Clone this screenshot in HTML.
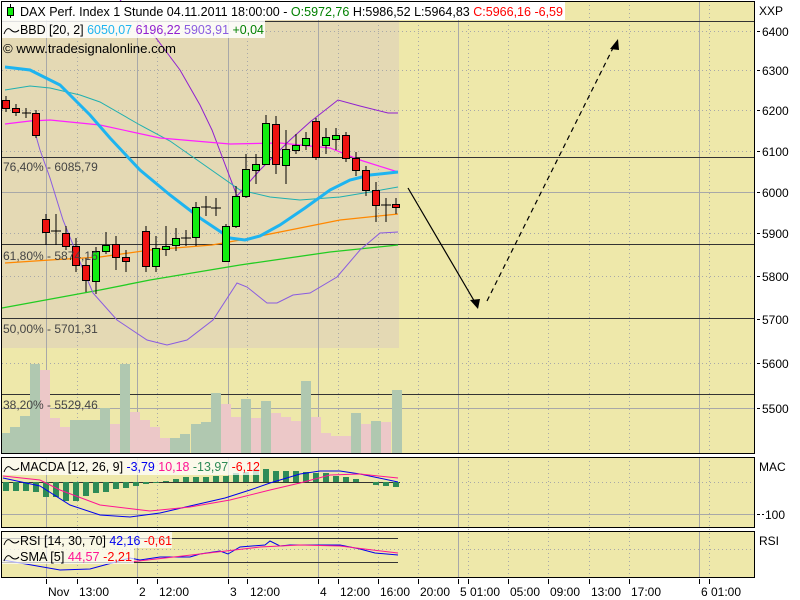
<!DOCTYPE html>
<html><head><meta charset="utf-8"><style>
html,body{margin:0;padding:0;background:#fff;width:800px;height:600px;overflow:hidden}
svg{display:block;font-family:"Liberation Sans",sans-serif}
</style></head><body>
<svg width="800" height="600" viewBox="0 0 800 600" xmlns="http://www.w3.org/2000/svg">
<!-- panels background -->
<rect x="2" y="1" width="752" height="452" fill="#eee8aa"/>
<rect x="2" y="457" width="752" height="70" fill="#eee8aa"/>
<rect x="2" y="531" width="752" height="46" fill="#eee8aa"/>
<!-- bollinger shading -->
<rect x="2" y="20" width="397" height="328" fill="#e4d9b4"/>
<!-- vertical grid -->
<g stroke="#a8a8a8" stroke-width="1">
<path d="M46.5 1V453M137.5 1V453M228.5 1V453M318.5 1V453M458.5 1V453M699.5 1V453"/>
<path d="M46.5 457V527M137.5 457V527M228.5 457V527M318.5 457V527M458.5 457V527M699.5 457V527"/>
<path d="M46.5 531V577M137.5 531V577M228.5 531V577M318.5 531V577M458.5 531V577M699.5 531V577"/>
</g>
<g stroke="#a8a8a8" stroke-width="1" stroke-dasharray="1,3">
<path d="M77.5 1V577M157.5 1V577M247.5 1V577M338.5 1V577M378.5 1V577M418.5 1V577M468.5 1V577M508.5 1V577M548.5 1V577M589.5 1V577M629.5 1V577M709.5 1V577"/>
<path d="M2 31.5H754M2 70.5H754M2 110.5H754M2 151.5H754M2 233.5H754M2 276.5H754M2 363.5H754M2 482.5H754M2 549.5H754"/>
</g>
<path d="M2 192.5H754M2 408.5H754M2 514.5H754" stroke="#a8a8a8"/>
<!-- fib lines -->
<path d="M2 21.5H754M2 157.5H754M2 244.5H754M2 318.5H754M2 394.5H754" stroke="#333"/>
<!-- volume -->
<g fill="#b0c8b0">
<rect x="2" y="433" width="8" height="20"/><rect x="10" y="427" width="10" height="26"/><rect x="20" y="416" width="10" height="37"/><rect x="30" y="364" width="10" height="89"/>
<rect x="70" y="420" width="30" height="33"/><rect x="100" y="408" width="10" height="45"/><rect x="120" y="364" width="10" height="89"/>
<rect x="170" y="438" width="10" height="15"/><rect x="180" y="434" width="10" height="19"/><rect x="191" y="424" width="10" height="29"/><rect x="201" y="422" width="10" height="31"/><rect x="211" y="393" width="10" height="60"/>
<rect x="241" y="399" width="10" height="54"/><rect x="261" y="401" width="10" height="52"/><rect x="301" y="381" width="10" height="72"/><rect x="351" y="413" width="10" height="40"/><rect x="371" y="421" width="10" height="32"/><rect x="392" y="390" width="10" height="63"/>
</g>
<g fill="#ecc8c8">
<rect x="40" y="370" width="10" height="83"/><rect x="50" y="418" width="10" height="35"/><rect x="60" y="427" width="10" height="26"/><rect x="110" y="424" width="10" height="29"/>
<rect x="130" y="412" width="10" height="41"/><rect x="140" y="420" width="10" height="33"/><rect x="150" y="427" width="10" height="26"/><rect x="160" y="438" width="10" height="15"/>
<rect x="221" y="404" width="10" height="49"/><rect x="231" y="417" width="10" height="36"/><rect x="251" y="418" width="10" height="35"/><rect x="271" y="413" width="10" height="40"/><rect x="281" y="417" width="10" height="36"/><rect x="291" y="421" width="10" height="32"/>
<rect x="311" y="417" width="10" height="36"/><rect x="321" y="433" width="10" height="20"/><rect x="331" y="436" width="20" height="17"/><rect x="361" y="424" width="10" height="29"/><rect x="381" y="422" width="10" height="31"/>
</g>
<!-- indicator lines -->
<g fill="none">
<polyline stroke="#22cc22" stroke-width="1.3" points="2,308 100,290 150,280 240,265 330,252 398,245"/>
<polyline stroke="#ff8800" stroke-width="1.3" points="5,263 50,260 100,257 150,250 212,245 240,240 290,230 340,220 398,214"/>
<polyline stroke="#8a5ce0" stroke-width="1" points="36,136 40,150 50,178 63,220 80,262 93,293 117,320 147,340 167,345 187,340 213,320 237,283 247,287 267,303 277,303 293,295 310,293 337,277 360,250 380,233 398,232"/>
<polyline stroke="#9020d0" stroke-width="1" points="120,0 150,30 180,70 200,105 212,130 237,196 260,170 290,140 310,122 338,100 360,106 388,113 398,113"/>
<polyline stroke="#20b0b0" stroke-width="1" points="5,90 30,86 50,88 80,95 100,102 140,125 170,141 200,162 240,190 270,197 300,200 340,197 370,192 398,187"/>
<polyline stroke="#ff20ff" stroke-width="1.2" points="5,124 30,121 50,120 100,125 160,138 230,144 280,143 330,148 360,160 398,172"/>
<polyline stroke="#1eb4f0" stroke-width="3" points="5,67 30,70 60,85 90,115 110,138 140,170 170,195 200,218 230,238 245,240 260,236 280,225 305,208 330,190 350,180 370,175 398,172"/>
</g>
<!-- candles -->
<g stroke="#000" stroke-width="1">
<path d="M6 96V112M16 104V116M26 108V118M36 110V138M46 214V245M56 214V245M66 226V250M76 238V272M86 258V292M96 247V294M106 232V254M116 236V270M126 250V272M146 226V272M156 236V272M166 226V256M176 228V251M186 230V246M196 202V246M206 196V216M216 198V216M226 224V262M236 186V228M246 154V198M256 154V184M266 115V165M276 116V174M286 130V184M296 134V154M306 132V150M316 118V160M326 128V154M336 128V150M346 132V162M356 152V176M366 166V196M376 182V222M386 198V222M396 198V214"/>
<path d="M22 113H31M51 231H61M181 238H191M201 207H211M211 208H221M381 205H391"/>
</g>
<g stroke="#000" stroke-width="1">
<g fill="#ee1111">
<rect x="2.5" y="100.5" width="7" height="8"/><rect x="12.5" y="108.5" width="7" height="4"/><rect x="32.5" y="113.5" width="7" height="22"/>
<rect x="42.5" y="219.5" width="7" height="13"/><rect x="62.5" y="233.5" width="7" height="13"/><rect x="72.5" y="246.5" width="7" height="19"/><rect x="82.5" y="265.5" width="7" height="15"/>
<rect x="112.5" y="244.5" width="7" height="13"/><rect x="122.5" y="257.5" width="7" height="4"/><rect x="142.5" y="231.5" width="7" height="35"/>
<rect x="272.5" y="124.5" width="7" height="40"/><rect x="312.5" y="121.5" width="7" height="36"/><rect x="342.5" y="135.5" width="7" height="23"/><rect x="352.5" y="158.5" width="7" height="12"/><rect x="362.5" y="170.5" width="7" height="20"/><rect x="372.5" y="190.5" width="7" height="15"/><rect x="392.5" y="204.5" width="7" height="3"/>
</g>
<g fill="#11ee11">
<rect x="92.5" y="251.5" width="7" height="30"/><rect x="102.5" y="245.5" width="7" height="6"/><rect x="152.5" y="248.5" width="7" height="18"/><rect x="162.5" y="246.5" width="7" height="3"/><rect x="172.5" y="238.5" width="7" height="7"/>
<rect x="192.5" y="207.5" width="7" height="30"/><rect x="222.5" y="226.5" width="7" height="35"/><rect x="232.5" y="196.5" width="7" height="30"/><rect x="242.5" y="169.5" width="7" height="27"/><rect x="252.5" y="164.5" width="7" height="6"/>
<rect x="262.5" y="123.5" width="7" height="41"/><rect x="282.5" y="149.5" width="7" height="16"/><rect x="292.5" y="145.5" width="7" height="5"/><rect x="302.5" y="138.5" width="7" height="7"/><rect x="322.5" y="137.5" width="7" height="8"/><rect x="332.5" y="135.5" width="7" height="4"/>
</g>
</g>
<!-- arrows -->
<path d="M408 188L476 304" stroke="#000" stroke-width="1.2"/>
<path d="M478 309L470 300L480 299Z" fill="#000"/>
<path d="M487 301L614 46" stroke="#000" stroke-width="1.2" stroke-dasharray="5,4" fill="none"/>
<path d="M618 39L610 49L619 50Z" fill="#000"/>
<!-- fib labels -->
<g font-size="12" fill="#444">
<text x="3" y="171">76,40% - 6085,79</text>
<text x="3" y="260">61,80% - 5874,16</text>
<text x="3" y="333">50,00% - 5701,31</text>
<text x="3" y="409">38,20% - 5529,46</text>
</g>
<!-- header -->
<rect x="2" y="2" width="563" height="18" fill="#fff"/>
<rect x="2" y="20" width="263" height="18" fill="#fff" fill-opacity="0.85"/>
<path d="M10.5 4V18" stroke="#000"/><rect x="7.5" y="7.5" width="6" height="8" fill="#11ee11" stroke="#000"/>
<text x="20" y="16" font-size="12.5" textLength="543" lengthAdjust="spacingAndGlyphs"><tspan fill="#000">DAX Perf. Index 1 Stunde  04.11.2011 18:00:00 - </tspan><tspan fill="#008000">O:5972,76</tspan><tspan fill="#000"> H:5986,52 L:5964,83 </tspan><tspan fill="#ff0000">C:5966,16 -6,59</tspan></text>
<path d="M4 34Q7 26 11 30T19 30" fill="none" stroke="#000"/>
<text x="20" y="34" font-size="12.5" textLength="244" lengthAdjust="spacingAndGlyphs"><tspan fill="#000">BBD [20, 2] </tspan><tspan fill="#1eb4f0">6050,07 </tspan><tspan fill="#9020d0">6196,22 </tspan><tspan fill="#8a5ce0">5903,91 </tspan><tspan fill="#008000">+0,04</tspan></text>
<text x="3" y="53" font-size="13" fill="#000" textLength="173" lengthAdjust="spacingAndGlyphs">© www.tradesignalonline.com</text>
<!-- MACD -->
<path d="M2 482.5H400" stroke="#333"/>
<g fill="#2e8b57">
<rect x="3" y="482" width="6" height="9"/><rect x="13" y="482" width="6" height="9"/><rect x="23" y="482" width="6" height="9"/><rect x="33" y="482" width="6" height="10"/><rect x="43" y="482" width="6" height="15"/><rect x="53" y="482" width="6" height="15"/><rect x="63" y="482" width="6" height="19"/><rect x="73" y="482" width="6" height="19"/><rect x="83" y="482" width="6" height="14"/><rect x="93" y="482" width="6" height="11"/><rect x="103" y="482" width="6" height="10"/><rect x="113" y="482" width="6" height="7"/><rect x="123" y="482" width="6" height="6"/><rect x="133" y="482" width="6" height="4"/><rect x="143" y="482" width="6" height="2"/><rect x="153" y="482" width="6" height="1"/>
<rect x="163" y="481" width="6" height="1"/><rect x="173" y="479" width="6" height="3"/><rect x="183" y="477" width="6" height="5"/><rect x="193" y="477" width="6" height="5"/><rect x="203" y="477" width="6" height="5"/><rect x="213" y="476" width="6" height="6"/><rect x="223" y="476" width="6" height="6"/><rect x="233" y="473" width="6" height="9"/><rect x="243" y="472" width="6" height="10"/><rect x="253" y="469" width="6" height="13"/><rect x="263" y="469" width="6" height="13"/><rect x="273" y="471" width="6" height="11"/><rect x="283" y="471" width="6" height="11"/><rect x="293" y="471" width="6" height="11"/><rect x="303" y="472" width="6" height="10"/><rect x="313" y="473" width="6" height="9"/><rect x="323" y="473" width="6" height="9"/><rect x="333" y="476" width="6" height="6"/><rect x="343" y="477" width="6" height="5"/><rect x="353" y="479" width="6" height="3"/>
<rect x="373" y="482" width="6" height="3"/><rect x="383" y="482" width="6" height="4"/><rect x="393" y="482" width="6" height="5"/>
</g>
<polyline fill="none" stroke="#0000ee" stroke-width="1" points="3,478 40,486 70,505 100,515 130,517 160,513 190,506 225,498 250,490 270,483 300,474 320,471 340,471 360,474 398,482"/>
<polyline fill="none" stroke="#ff1493" stroke-width="1" points="3,476 40,480 60,490 100,505 150,511 190,507 230,500 270,490 300,483 330,475 360,474 398,478"/>
<rect x="2" y="458" width="258" height="17" fill="#fff" fill-opacity="0.75"/>
<path d="M4 472Q7 464 11 468T19 468" fill="none" stroke="#000"/>
<text x="20" y="471" font-size="12.5" textLength="240" lengthAdjust="spacingAndGlyphs"><tspan fill="#000">MACDA [12, 26, 9] </tspan><tspan fill="#0000ee">-3,79 </tspan><tspan fill="#ff1493">10,18 </tspan><tspan fill="#2e8b57">-13,97 </tspan><tspan fill="#ff0000">-6,12</tspan></text>
<!-- RSI -->
<path d="M2 538.5H398M2 562.5H398" stroke="#333"/>
<polyline fill="none" stroke="#0000ee" points="3,560 60,570 90,569 130,558 140,560 160,557 190,557 200,554 220,551 228,554 240,547 265,545 270,541 280,546 290,545 320,545 340,545 360,549 375,553 398,555"/>
<polyline fill="none" stroke="#ff1493" points="130,562 200,554 260,547 300,545 340,546 398,553"/>
<rect x="2" y="532" width="170" height="16" fill="#fff" fill-opacity="0.7"/>
<rect x="2" y="548" width="132" height="16" fill="#fff" fill-opacity="0.7"/>
<path d="M4 545Q7 537 11 541T19 541" fill="none" stroke="#000"/>
<text x="20" y="545" font-size="12.5" textLength="152" lengthAdjust="spacingAndGlyphs"><tspan fill="#000">RSI [14, 30, 70] </tspan><tspan fill="#0000ee">42,16 </tspan><tspan fill="#ff0000">-0,61</tspan></text>
<path d="M4 561Q7 553 11 557T19 557" fill="none" stroke="#000"/>
<text x="20" y="561" font-size="12.5" textLength="112" lengthAdjust="spacingAndGlyphs"><tspan fill="#000">SMA [5] </tspan><tspan fill="#ff1493">44,57 </tspan><tspan fill="#ff0000">-2,21</tspan></text>
<!-- panel borders -->
<g fill="none" stroke="#000" stroke-width="1">
<rect x="1.5" y="1.5" width="753" height="452"/>
<rect x="1.5" y="457.5" width="753" height="70"/>
<rect x="1.5" y="531.5" width="753" height="46"/>
</g>
<!-- right axis -->
<g stroke="#000"><path d="M757 31.5H760M757 70.5H760M757 110.5H760M757 151.5H760M757 192.5H760M757 233.5H760M757 276.5H760M757 319.5H760M757 363.5H760M757 408.5H760M757 514.5H760M762 514.5H764"/></g>
<g font-size="12" fill="#000">
<text x="759" y="15">XXP</text>
<text x="762" y="36">6400</text><text x="762" y="75">6300</text><text x="762" y="115">6200</text><text x="762" y="156">6100</text><text x="762" y="197">6000</text><text x="762" y="238">5900</text><text x="762" y="281">5800</text><text x="762" y="324">5700</text><text x="762" y="368">5600</text><text x="762" y="413">5500</text>
<text x="759" y="471">MAC</text><text x="765" y="519">100</text><text x="759" y="545">RSI</text>
</g>
<!-- bottom axis -->
<g stroke="#000"><path d="M46.5 579V584M77.5 579V584M137.5 579V584M157.5 579V584M228.5 579V584M247.5 579V584M318.5 579V584M338.5 579V584M378.5 579V584M418.5 579V584M458.5 579V584M468.5 579V584M508.5 579V584M548.5 579V584M589.5 579V584M629.5 579V584M699.5 579V584M709.5 579V584"/></g>
<g font-size="12" fill="#000">
<text x="48" y="596">Nov</text><text x="79" y="596">13:00</text><text x="139" y="596">2</text><text x="159" y="596">12:00</text><text x="230" y="596">3</text><text x="250" y="596">12:00</text><text x="320" y="596">4</text><text x="340" y="596">12:00</text><text x="380" y="596">16:00</text><text x="420" y="596">20:00</text><text x="460" y="596">5</text><text x="470" y="596">01:00</text><text x="510" y="596">05:00</text><text x="550" y="596">09:00</text><text x="591" y="596">13:00</text><text x="631" y="596">17:00</text><text x="701" y="596">6</text><text x="711" y="596">01:00</text>
</g>
</svg>
</body></html>
